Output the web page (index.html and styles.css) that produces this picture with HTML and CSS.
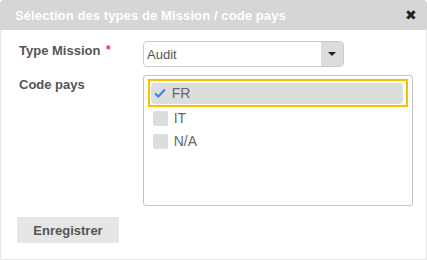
FILE: index.html
```html
<!DOCTYPE html>
<html lang="fr">
<head>
<meta charset="utf-8">
<link rel="stylesheet" href="styles.css">
</head>
<body>
<div class="dialog">
  <div class="titlebar">
    <span class="title">Sélection des types de Mission / code pays</span>
    <span class="close">✖</span>
  </div>
  <div class="content">
    <div class="row">
      <label class="label">Type Mission <span class="req">*</span></label>
      <div class="select">
        <span class="select-value">Audit</span>
        <span class="select-btn"><span class="caret"></span></span>
      </div>
    </div>
    <div class="row row-list">
      <label class="label">Code pays</label>
      <div class="listbox">
        <div class="item focused">
          <div class="item-inner selected">
            <svg class="check" width="12" height="10" viewBox="0 0 12 10"><path d="M1 5.5 L4.3 8.5 L11 1.5" fill="none" stroke="#3a86e8" stroke-width="2.2"/></svg>
            <span class="item-text">FR</span>
          </div>
        </div>
        <div class="item">
          <div class="item-inner">
            <span class="box"></span>
            <span class="item-text">IT</span>
          </div>
        </div>
        <div class="item">
          <div class="item-inner">
            <span class="box"></span>
            <span class="item-text">N/A</span>
          </div>
        </div>
      </div>
    </div>
    <div class="actions">
      <button class="btn">Enregistrer</button>
    </div>
  </div>
</div>
</body>
</html>
```
FILE: styles.css
```css
* { box-sizing: border-box; }
html, body { margin: 0; padding: 0; background: #fff; }
body { font-family: "Liberation Sans", Arial, sans-serif; }
.dialog {
  width: 427px;
  height: 260px;
  border: 1px solid #e4e4e4;
  border-radius: 5px 5px 0 0;
  display: flex;
  flex-direction: column;
}
.titlebar {
  height: 30px;
  background: #d6d6d6;
  border-radius: 4px 4px 0 0;
  margin: -1px -1px 0 -1px;
  display: flex;
  align-items: center;
  justify-content: space-between;
  padding: 0 10px 0 15px;
}
.title { color: #fff; font-weight: bold; font-size: 13px; letter-spacing: 0.1px; }
.close { color: #222; font-size: 14px; }
.content { padding: 11px 13px 0 18px; display: flex; flex-direction: column; }
.row { display: flex; align-items: flex-start; }
.label {
  width: 124px;
  font-weight: bold;
  font-size: 13px;
  color: #555;
  padding-top: 2px;
}
.req { color: #e33; font-size: 12px; vertical-align: top; margin-left: 2px; }
.select {
  width: 201px;
  height: 26px;
  border: 1px solid #ccc;
  border-radius: 4px;
  display: flex;
  align-items: stretch;
  overflow: hidden;
}
.select-value { flex: 1; font-size: 13px; color: #555; padding: 5px 0 0 3px; }
.select-btn {
  width: 22px;
  background: #dcdcdc;
  display: flex;
  align-items: center;
  justify-content: center;
}
.caret {
  width: 0; height: 0;
  border-left: 4px solid transparent;
  border-right: 4px solid transparent;
  border-top: 4px solid #222;
}
.row-list { margin-top: 8px; }
.listbox {
  width: 271px;
  height: 131px;
  border: 1px solid #c4c4c4;
  border-radius: 3px;
  padding: 3px 4px 0 4px;
}
.item { padding: 1px 2px; }
.item.focused { border: 2px solid #f6c100; padding: 2px 3px 1px 1px; }
.item-inner {
  height: 21px;
  display: flex;
  align-items: center;
  border-radius: 4px;
  padding-left: 3px;
}
.item-inner.selected { background: #dcdedd; }
.check { margin-left: 0; width: 12px; margin-top: -2px; }
.box {
  width: 15px; height: 15px;
  background: #dcdedd;
  border-radius: 2px;
}
.item-text { font-size: 14px; color: #666; margin-left: 6px; margin-top: -2px; }
.actions { margin-top: 11px; margin-left: -2px; }
.btn {
  width: 102px;
  height: 26px;
  border: none;
  border-radius: 2px;
  background: #e6e6e6;
  color: #555;
  font-family: "Liberation Sans", Arial, sans-serif;
  font-weight: bold;
  font-size: 13px;
  padding: 0;
}
```
